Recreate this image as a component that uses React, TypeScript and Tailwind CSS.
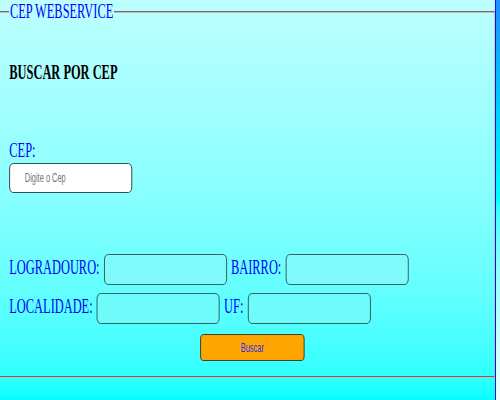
export default function App() {
  return (
    <div className="flex h-[400px] w-[500px]">
      <div className="h-full w-[495px] overflow-hidden bg-linear-to-b from-[#bdffff] to-[#00ffff]">
        <div className="w-[798px] origin-top-left scale-x-[0.62] font-['Liberation_Serif',serif]">
          <fieldset className="m-0 min-w-0 border-2 border-l-0 border-[#c4b8b8] pb-[15px] pl-[15px] [border-style:groove]">
            <legend className="px-[1px] text-[20px] leading-[23px] text-[#0000ff]">CEP WEBSERVICE</legend>

            <h3 className="mt-[38px] text-[20px] font-bold leading-[23px] text-black">BUSCAR POR CEP</h3>

            <label className="mt-[55px] block text-[20px] leading-[23px] text-[#0000ff]">CEP:</label>
            <input
              type="text"
              placeholder="Digite o Cep"
              className="mt-[1px] block h-[30px] w-[198px] rounded-md border border-[#142626] bg-white pl-6 font-['Liberation_Sans',sans-serif] text-[12px] placeholder:text-[#757575]"
            />

            <div className="mt-[61px] flex items-baseline gap-[7px] text-[20px] leading-[23px] text-[#0000ff]">
              <label>LOGRADOURO:</label>
              <input type="text" className="h-[31px] w-[198px] rounded-md border border-[#224040] bg-[#80fbfb] font-['Liberation_Sans',sans-serif] text-[12px]" />
              <label>BAIRRO:</label>
              <input type="text" className="h-[31px] w-[198px] rounded-md border border-[#224040] bg-[#80fbfb] font-['Liberation_Sans',sans-serif] text-[12px]" />
            </div>

            <div className="mt-[8px] flex items-baseline gap-[7px] text-[20px] leading-[23px] text-[#0000ff]">
              <label>LOCALIDADE:</label>
              <input type="text" className="h-[31px] w-[198px] rounded-md border border-[#224040] bg-[#70fbfb] font-['Liberation_Sans',sans-serif] text-[12px]" />
              <label>UF:</label>
              <input type="text" className="h-[31px] w-[198px] rounded-md border border-[#224040] bg-[#70fbfb] font-['Liberation_Sans',sans-serif] text-[12px]" />
            </div>

            <button
              type="button"
              className="ml-[308px] mt-[10px] block h-[27px] w-[168px] rounded-[5px] border-[1.5px] border-[#222222] bg-[#ffa500] font-['Liberation_Sans',sans-serif] text-[12px] text-[#2a2af5]"
            >
              Buscar
            </button>
          </fieldset>
        </div>
      </div>
      <div className="h-full w-[5px] border-l border-[#1010e0] bg-linear-to-b from-[#1e90ff] via-[#00ffff] to-[#f0ffff]" />
    </div>
  );
}
